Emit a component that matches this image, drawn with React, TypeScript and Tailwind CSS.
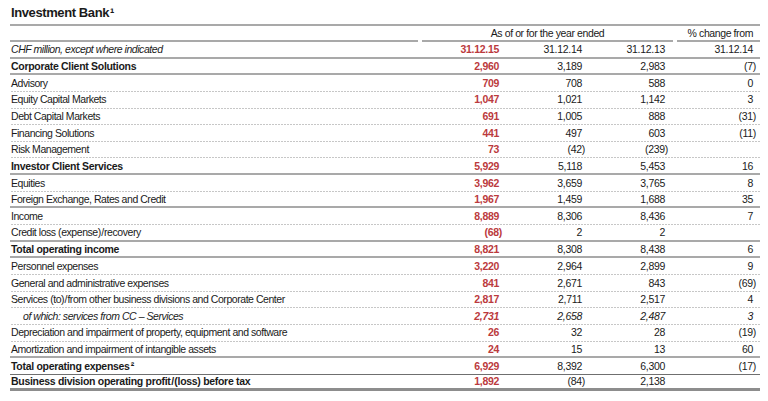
import React from 'react'

type LineKind = 'dot' | 'solid' | 'thin' | 'thick'

interface TableRow {
  label: string
  sup?: string
  values: [string, string, string, string]
  bold?: boolean
  italic?: boolean
  line: LineKind
}

const ROWS: TableRow[] = [
  { label: 'Corporate Client Solutions', values: ['2,960', '3,189', '2,983', '(7)'], bold: true, line: 'solid' },
  { label: 'Advisory', values: ['709', '708', '588', '0'], line: 'dot' },
  { label: 'Equity Capital Markets', values: ['1,047', '1,021', '1,142', '3'], line: 'dot' },
  { label: 'Debt Capital Markets', values: ['691', '1,005', '888', '(31)'], line: 'dot' },
  { label: 'Financing Solutions', values: ['441', '497', '603', '(11)'], line: 'dot' },
  { label: 'Risk Management', values: ['73', '(42)', '(239)', ''], line: 'dot' },
  { label: 'Investor Client Services', values: ['5,929', '5,118', '5,453', '16'], bold: true, line: 'solid' },
  { label: 'Equities', values: ['3,962', '3,659', '3,765', '8'], line: 'dot' },
  { label: 'Foreign Exchange, Rates and Credit', values: ['1,967', '1,459', '1,688', '35'], line: 'solid' },
  { label: 'Income', values: ['8,889', '8,306', '8,436', '7'], line: 'dot' },
  { label: 'Credit loss (expense)\u200a/\u200arecovery', values: ['(68)', '2', '2', ''], line: 'solid' },
  { label: 'Total operating income', values: ['8,821', '8,308', '8,438', '6'], bold: true, line: 'solid' },
  { label: 'Personnel expenses', values: ['3,220', '2,964', '2,899', '9'], line: 'dot' },
  { label: 'General and administrative expenses', values: ['841', '2,671', '843', '(69)'], line: 'dot' },
  { label: 'Services (to)\u200a/\u200afrom other business divisions and Corporate Center', values: ['2,817', '2,711', '2,517', '4'], line: 'dot' },
  { label: 'of which: services from CC \u2013 Services', values: ['2,731', '2,658', '2,487', '3'], italic: true, line: 'dot' },
  { label: 'Depreciation and impairment of property, equipment and software', values: ['26', '32', '28', '(19)'], line: 'dot' },
  { label: 'Amortization and impairment of intangible assets', values: ['24', '15', '13', '60'], line: 'solid' },
  { label: 'Total operating expenses', sup: '\u00b2', values: ['6,929', '8,392', '6,300', '(17)'], bold: true, line: 'thin' },
  { label: 'Business division operating profit\u200a/\u200a(loss) before tax', values: ['1,892', '(84)', '2,138', ''], bold: true, line: 'thick' },
]

const LINE: Record<LineKind, string> = {
  dot: 'bg-[linear-gradient(to_right,#8f8f8f_1px,transparent_1px)] bg-[length:3px_1px] bg-repeat-x bg-bottom pb-px',
  solid: 'border-b-2 border-[#a9a9a9]',
  thin: 'border-b border-[#6f6f6f]',
  thick: 'border-b-[3px] border-[#8d8d8d]',
}

function Num({ v }: { v: string }) {
  // closing parenthesis hangs into the right padding
  return <span className={v.endsWith(')') ? '-mr-[3px]' : ''}>{v}</span>
}

function Row({ row }: { row: TableRow }) {
  const labelCls = row.bold
    ? 'pl-px font-bold tracking-[-0.3px]'
    : row.italic
      ? 'pl-[13px] tracking-[-0.45px]'
      : 'pl-px tracking-[-0.45px]'
  return (
    <div className={`flex h-[16.65px] items-center ${LINE[row.line]} ${row.italic ? 'italic' : ''}`}>
      <div className={`w-[408px] ${labelCls}`}>
        {row.label}
        {row.sup && <span className="ml-px">{row.sup}</span>}
      </div>
      <div className="w-[89px] pr-[8px] text-right font-bold text-[#bb3a3d]">
        <Num v={row.values[0]} />
      </div>
      <div className="w-[83px] pr-[8px] text-right">
        <Num v={row.values[1]} />
      </div>
      <div className="w-[83px] pr-[8px] text-right">
        <Num v={row.values[2]} />
      </div>
      <div className="w-[87px] pr-[7px] text-right">
        <Num v={row.values[3]} />
      </div>
    </div>
  )
}

export default function App() {
  return (
    <div className="min-h-[401px] w-[768px] bg-white pl-[10px] font-[family-name:Liberation_Sans,Arial,sans-serif] text-[10.5px] leading-none tracking-[-0.3px] text-[#1a1a1a]">
      <div className="w-[750px]">
        <div className="flex h-[24px] items-center pl-px text-[13px] font-bold tracking-[-0.4px] text-[#1a1a1a]">
          Investment Bank<span className="ml-px">{'\u00b9'}</span>
        </div>
        <div className="h-[2px] bg-[#a9a9a9]" />

        <div className="flex h-[16px]">
          <div className="w-[408px] border-b-2 border-[#a9a9a9]" />
          <div className="ml-[4px] flex w-[251px] items-center justify-center border-b-2 border-[#a9a9a9] tracking-[-0.4px]">
            As of or for the year ended
          </div>
          <div className="ml-[4px] flex w-[83px] items-center justify-end border-b-2 border-[#a9a9a9] pr-[7px] tracking-[-0.4px]">
            % change from
          </div>
        </div>

        <div className={`flex h-[16.65px] items-center ${LINE.solid}`}>
          <div className="w-[408px] pl-px italic tracking-[-0.45px]">CHF million, except where indicated</div>
          <div className="w-[89px] pr-[8px] text-right font-bold text-[#bb3a3d]">31.12.15</div>
          <div className="w-[83px] pr-[8px] text-right">31.12.14</div>
          <div className="w-[83px] pr-[8px] text-right">31.12.13</div>
          <div className="w-[87px] pr-[7px] text-right">31.12.14</div>
        </div>

        {ROWS.map((r) => (
          <Row key={r.label} row={r} />
        ))}
      </div>
    </div>
  )
}
